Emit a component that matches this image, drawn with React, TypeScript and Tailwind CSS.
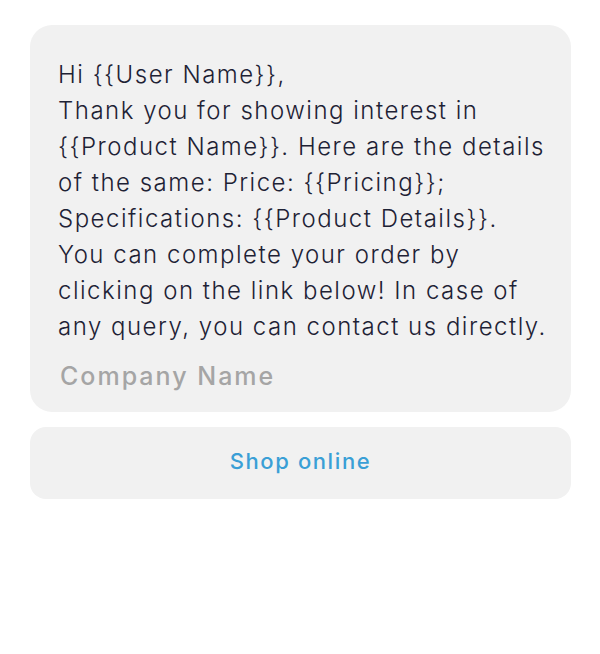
export default function App() {
  return (
    <div className="w-[600px] h-[654px] bg-white px-[30px] pt-[25px] font-['Inter',sans-serif]">
      <div className="w-[541px] flex flex-col gap-[15px]">
        <div className="bg-[#f1f1f1] rounded-[22px] pt-[32px] pb-[18px] pl-[28px] pr-[4px]">
          <p className="text-[#1e2235] text-[24px] leading-[36px] font-light whitespace-nowrap tracking-[1.5px]">
            Hi {'{{User Name}}'},
            <br />
            Thank you for showing interest in
            <br />
            {'{{Product Name}}'}. Here are the details
            <br />
            of the same: Price: {'{{Pricing}}'};
            <br />
            Specifications: {'{{Product Details}}'}.
            <br />
            You can complete your order by
            <br />
            clicking on the link below! In case of
            <br />
            any query, you can contact us directly.
          </p>
          <div className="mt-[13px] pl-[2px] text-[#a5a5a5] text-[25px] leading-[36px] font-medium tracking-[2px]">
            Company Name
          </div>
        </div>
        <div className="bg-[#f1f1f1] rounded-[16px] h-[72px] flex items-center justify-center">
          <span className="text-[#3a9fd6] text-[22px] font-medium tracking-[1.6px] -mt-[3px]">Shop online</span>
        </div>
      </div>
    </div>
  );
}
